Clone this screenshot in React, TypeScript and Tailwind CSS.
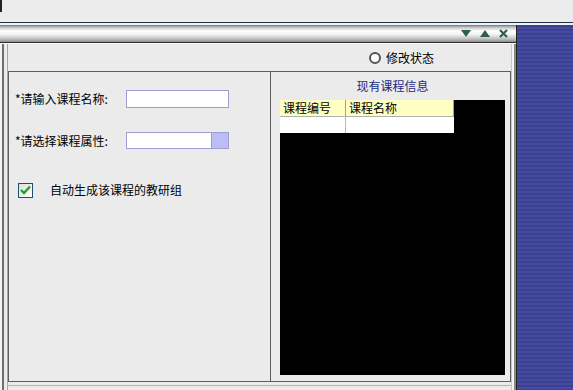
import React from "react";

const font = { fontFamily: '"Noto Sans CJK SC", "Noto Sans", sans-serif' };

export default function App() {
  return (
    <div
      className="w-[573px] h-[390px] bg-[#ebebeb] flex flex-col overflow-hidden text-[12px] text-black"
      style={font}
    >
      {/* top bar */}
      <div className="h-[22px] bg-[#ececec] flex">
        <div className="w-[2px] h-[12px] bg-[#222]" />
      </div>
      <div className="h-[1px] bg-[#1e3240]" />
      <div className="h-[2px] bg-[#eef2f5]" />
      <div className="flex-1 flex min-h-0">
        {/* window */}
        <div className="flex-1 flex flex-col min-w-0">
          {/* title bar */}
          <div className="h-[18px] bg-[linear-gradient(to_bottom,#707070_0%,#bdbdbd_12%,#ffffff_35%,#f3f3f3_55%,#c4c4c4_80%,#8c8c8c_100%)] flex items-center justify-end gap-[9px] pr-[8px] border-b border-[#2e2e2e]">
            <svg width="10" height="7" viewBox="0 0 10 7">
              <polygon points="0,0 10,0 5,7" fill="#2d6048" />
            </svg>
            <svg width="10" height="7" viewBox="0 0 10 7">
              <polygon points="0,7 10,7 5,0" fill="#2d6048" />
            </svg>
            <svg width="9" height="9" viewBox="0 0 9 9">
              <path d="M1 1 L8 8 M8 1 L1 8" stroke="#2d6048" strokeWidth="2.2" />
            </svg>
          </div>
          {/* content */}
          <div className="flex-1 flex min-h-0 border-t border-[#f8f8f8]">
            <div className="w-[2px] bg-[#f4f4f4]" />
            <div className="w-[2px] bg-[#6e6e6e]" />
            <div className="w-[3px] bg-[#ebebeb]" />
            <div className="w-[1px] bg-[#a8a8a8]" />
            <div className="flex-1 flex flex-col min-w-0">
              {/* radio row */}
              <div className="h-[27px] flex items-center pl-[361px] gap-[5px]">
                <div className="w-[12px] h-[12px] rounded-full border-[2px] border-[#555] bg-white" />
                <span className="text-[12px] leading-none">修改状态</span>
              </div>
              {/* panels */}
              <div className="flex-1 flex border-t border-[#5e5e5e] min-h-0">
                {/* left panel */}
                <div className="w-[263px] border-l border-r border-b border-[#5e5e5e] flex flex-col pl-[6px]">
                  <div className="flex items-center mt-[18px] h-[18px]">
                    <span className="w-[111px]">*请输入课程名称:</span>
                    <div className="w-[103px] h-[18px] border border-[#9e9ed0] bg-white" />
                  </div>
                  <div className="flex items-center mt-[24px] h-[17px]">
                    <span className="w-[111px]">*请选择课程属性:</span>
                    <div className="w-[103px] h-[17px] border border-[#9e9ed0] bg-white flex justify-end">
                      <div className="w-[17px] h-full bg-[#bcbdf7] border-l border-[#9e9ed0]" />
                    </div>
                  </div>
                  <div className="flex items-center mt-[32px] pl-[3px] gap-[17px]">
                    <div className="w-[15px] h-[15px] border border-[#1f4f6e] bg-[linear-gradient(to_bottom_right,#dcdcdc,#ffffff)] flex items-center justify-center">
                      <svg width="11" height="10" viewBox="0 0 11 10">
                        <path d="M1 5 L4 8 L10 1.5" stroke="#22a322" strokeWidth="2.4" fill="none" />
                      </svg>
                    </div>
                    <span>自动生成该课程的教研组</span>
                  </div>
                </div>
                {/* right panel */}
                <div className="flex-1 border-r border-b border-[#5e5e5e] flex flex-col pl-[9px] pr-[5px] pb-[6px]">
                  <div className="h-[28px] flex items-center justify-center text-[#1b2a86] text-[12px]">
                    现有课程信息
                  </div>
                  <div className="flex-1 bg-black">
                    <div className="w-[174px]">
                      <div className="flex h-[17px] bg-[#ffffc4] border-b border-[#b0b0b0]">
                        <div className="w-[66px] border-r border-[#a0a0a0] pl-[3px] leading-[16px]">课程编号</div>
                        <div className="flex-1 border-r border-[#a0a0a0] pl-[3px] leading-[16px]">课程名称</div>
                      </div>
                      <div className="flex h-[16px] bg-white">
                        <div className="w-[66px] border-r border-[#b8b8b8]" />
                        <div className="flex-1" />
                      </div>
                    </div>
                  </div>
                </div>
              </div>
              <div className="h-[3px]" />
              <div className="h-[1px] bg-[#b4b4b4]" />
              <div className="h-[4px]" />
            </div>
            <div className="w-[1px] bg-[#c8c8c8]" />
            <div className="w-[2px] bg-[#f4f4f4]" />
            <div className="w-[2px] bg-[#8a8a8a]" />
          </div>
        </div>
        {/* blue side */}
        <div className="w-[57px] bg-[repeating-linear-gradient(to_bottom,#3b4192_0px,#3b4192_2px,#464ba0_2px,#464ba0_4px)] border-l border-[#222]" />
      </div>
    </div>
  );
}
